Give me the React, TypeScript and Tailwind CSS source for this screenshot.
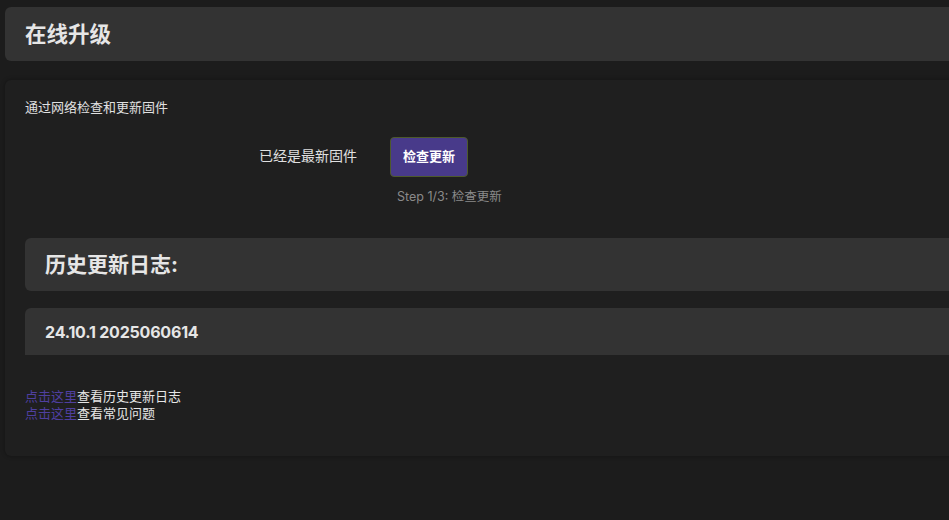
export default function App() {
  return (
    <div
      className="w-full h-[520px] overflow-hidden bg-[#1c1c1c] text-[#e0e0e0]"
      style={{ fontFamily: 'Inter, "Noto Sans CJK SC", sans-serif' }}
    >
      <div className="w-[1000px] pl-[5px] pt-[7px]">
        {/* Page title */}
        <div className="h-[54px] flex items-center px-5 rounded-md bg-[#333333]">
          <h2 className="text-[21.5px] font-bold text-[#e6e6e6]">在线升级</h2>
        </div>

        {/* Main card */}
        <div className="mt-[19px] h-[376px] rounded-md bg-[#1f1f1f] shadow-[0_0_4px_rgba(0,0,0,0.35)] px-5 pt-[18px]">
          <p className="text-[13px] leading-[18px] text-[#e0e0e0]">通过网络检查和更新固件</p>

          <div className="mt-[21px] flex items-start">
            <div className="w-[332px] pt-[9px] text-right text-[14px] leading-[20px] text-[#e0e0e0]">
              已经是最新固件
            </div>
            <div className="ml-[33px] flex flex-col">
              <button className="w-[78px] h-[40px] rounded-[4px] border border-[#4d5a2c] bg-[#483a8a] text-[13px] font-semibold text-white">
                检查更新
              </button>
              <span className="mt-[12px] ml-[7px] text-[12.5px] leading-[16px] text-[#8a8a8a]">Step 1/3: 检查更新</span>
            </div>
          </div>

          {/* History */}
          <div className="mt-[33px] h-[53px] flex items-center px-5 rounded-md bg-[#333333]">
            <h3 className="text-[21px] font-bold text-[#e6e6e6]">历史更新日志:</h3>
          </div>
          <div className="mt-[17px] h-[47px] flex items-center px-5 rounded-t-md bg-[#333333]">
            <span className="text-[16px] font-bold tracking-[-0.2px] text-[#e6e6e6]">24.10.1 2025060614</span>
          </div>

          <div className="mt-[33px] text-[13px] leading-[17px]">
            <div>
              <a className="text-[#4f3fa0]">点击这里</a>
              <span className="text-[#e6e6e6]">查看历史更新日志</span>
            </div>
            <div>
              <a className="text-[#4f3fa0]">点击这里</a>
              <span className="text-[#e6e6e6]">查看常见问题</span>
            </div>
          </div>
        </div>
      </div>
    </div>
  );
}
